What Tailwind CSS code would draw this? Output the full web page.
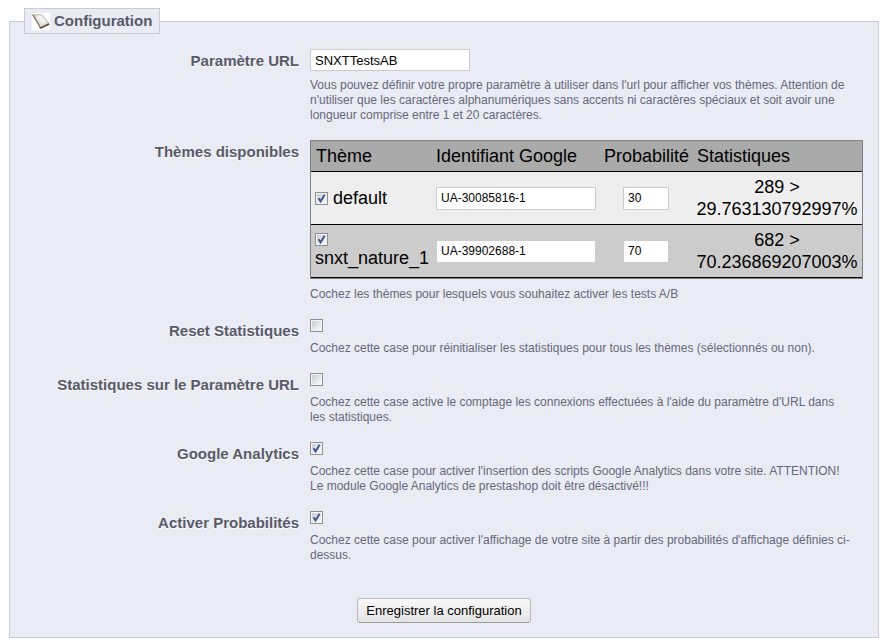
<!DOCTYPE html>
<html lang="fr">
<head>
<meta charset="utf-8">
<meta name="viewport" content="width=device-width, initial-scale=1">
<title>Configuration</title>
<script src="https://cdn.jsdelivr.net/npm/@tailwindcss/browser@4"></script>
</head>
<body class="bg-white font-['Liberation_Sans',Arial,sans-serif] text-black">
<svg class="hidden" aria-hidden="true">
  <symbol id="tick" viewBox="0 0 13 13"><path d="M3.6 6.2 5.6 9.4 9.6 2.8" fill="none" stroke="#3f5690" stroke-width="2"/></symbol>
</svg>
<form class="px-[9px] pt-2 pb-1">
  <fieldset class="border border-[#c9cbd6] bg-[#e9ecf4] px-[14px] pb-[14px]">
    <legend class="flex h-[26px] items-center gap-1 border border-[#c9cbd6] bg-[#e9ecf4] px-[7px] text-[15px] font-bold text-[#585a69]">
      <svg class="h-[17px] w-[18px] bg-white" viewBox="0 0 18 17" aria-hidden="true">
        <path d="M0.5 2 8 14 17 10.5 9.5 1.5Z" fill="#e6e2da" stroke="#b5aa98" stroke-width="0.8"/>
        <path d="M5 3 10 10.5 14.5 9 8.8 2.3Z" fill="#eef4fa"/>
        <path d="M0.8 1.6 8 13.8" stroke="#80715a" stroke-width="1.2"/>
        <path d="M7.6 14.6 9 15 17.2 11" fill="none" stroke="#5c4a35" stroke-width="1.6"/>
      </svg>
      Configuration
    </legend>

    <div class="grid grid-cols-[275px_minmax(0,1fr)] items-start gap-x-[11px] gap-y-[17px] pt-[15px] text-xs leading-[15px] text-[#66687a]">
      <label for="param" class="pt-1 text-right text-[15px] font-bold text-[#585a69] [text-shadow:0_1px_0_#fff]">Paramètre URL</label>
      <div>
        <input id="param" type="text" value="SNXTTestsAB" class="block h-[22px] w-40 border border-[#ccc] bg-white px-1 text-[13px] text-black">
        <p class="mt-[7px]">Vous pouvez définir votre propre paramètre à utiliser dans l'url pour afficher vos thèmes. Attention de n'utiliser que les caractères alphanumériques sans accents ni caractères spéciaux et soit avoir une longueur comprise entre 1 et 20 caractères.</p>
      </div>

      <div id="themes" class="pt-1 text-right text-[15px] font-bold text-[#585a69] [text-shadow:0_1px_0_#fff]">Thèmes disponibles</div>
      <div>
        <div class="mr-[1px] border border-[#808080]">
          <table aria-labelledby="themes" class="w-full table-fixed border-separate border-spacing-0 text-lg leading-[22px] text-black">
            <colgroup><col class="w-[120px]"><col class="w-[169px]"><col class="w-[92px]"><col></colgroup>
            <thead>
              <tr class="bg-[#aaa] text-left">
                <th class="border-b border-black px-[5px] py-1 font-normal whitespace-nowrap">Thème</th>
                <th class="border-b border-black px-[5px] py-1 font-normal whitespace-nowrap">Identifiant Google</th>
                <th class="border-b border-black px-1 py-1 font-normal whitespace-nowrap">Probabilité</th>
                <th class="border-b border-black px-[5px] py-1 font-normal whitespace-nowrap">Statistiques</th>
              </tr>
            </thead>
            <tbody>
              <tr class="bg-[#eee]">
                <td class="border-b border-black px-1 py-1">
                  <label class="flex items-center gap-x-[5px]">
                    <span class="grid">
                      <input type="checkbox" checked class="peer col-start-1 row-start-1 size-[13px] appearance-none border border-[#8e8f8f] bg-gradient-to-br from-[#c3c8d0] to-white ring-1 ring-[#f4f4f4] ring-inset">
                      <svg class="pointer-events-none invisible col-start-1 row-start-1 size-[13px] peer-checked:visible"><use href="#tick"/></svg>
                    </span>
                    default
                  </label>
                </td>
                <td class="border-b border-black px-[5px] py-1"><input type="text" aria-label="Identifiant Google default" value="UA-30085816-1" class="block h-[23px] w-40 border border-[#ccc] bg-white px-1 text-xs"></td>
                <td class="border-b border-black px-1 py-1"><input type="text" aria-label="Probabilité default" value="30" class="mx-auto block h-[23px] w-[46px] border border-[#ccc] bg-white px-1 text-xs"></td>
                <td class="border-b border-black px-1 py-1 text-center">289 &gt; 29.763130792997%</td>
              </tr>
              <tr class="bg-[#ccc]">
                <td class="border-b border-black px-1 py-1 align-top">
                  <label class="block leading-[18px]">
                    <span class="grid h-5 content-center">
                      <input type="checkbox" checked class="peer col-start-1 row-start-1 size-[13px] appearance-none border border-[#8e8f8f] bg-gradient-to-br from-[#c3c8d0] to-white ring-1 ring-[#f4f4f4] ring-inset">
                      <svg class="pointer-events-none invisible col-start-1 row-start-1 size-[13px] peer-checked:visible"><use href="#tick"/></svg>
                    </span>
                    snxt_nature_1
                  </label>
                </td>
                <td class="border-b border-black px-[5px] py-1"><input type="text" aria-label="Identifiant Google snxt_nature_1" value="UA-39902688-1" class="block h-[23px] w-40 border border-[#ccc] bg-white px-1 text-xs"></td>
                <td class="border-b border-black px-1 py-1"><input type="text" aria-label="Probabilité snxt_nature_1" value="70" class="mx-auto block h-[23px] w-[46px] border border-[#ccc] bg-white px-1 text-xs"></td>
                <td class="border-b border-black px-1 py-1 text-center">682 &gt; 70.236869207003%</td>
              </tr>
            </tbody>
          </table>
        </div>
        <p class="mt-2">Cochez les thèmes pour lesquels vous souhaitez activer les tests A/B</p>
      </div>

      <label for="reset" class="pt-1 text-right text-[15px] font-bold text-[#585a69] [text-shadow:0_1px_0_#fff]">Reset Statistiques</label>
      <div>
        <div class="grid">
          <input id="reset" type="checkbox" class="peer col-start-1 row-start-1 size-[13px] appearance-none border border-[#8e8f8f] bg-gradient-to-br from-[#c3c8d0] to-white ring-1 ring-[#f4f4f4] ring-inset">
          <svg class="pointer-events-none invisible col-start-1 row-start-1 size-[13px] peer-checked:visible"><use href="#tick"/></svg>
        </div>
        <p class="mt-[9px]">Cochez cette case pour réinitialiser les statistiques pour tous les thèmes (sélectionnés ou non).</p>
      </div>

      <label for="stats" class="pt-1 text-right text-[15px] font-bold text-[#585a69] [text-shadow:0_1px_0_#fff]">Statistiques sur le Paramètre URL</label>
      <div>
        <div class="grid">
          <input id="stats" type="checkbox" class="peer col-start-1 row-start-1 size-[13px] appearance-none border border-[#8e8f8f] bg-gradient-to-br from-[#c3c8d0] to-white ring-1 ring-[#f4f4f4] ring-inset">
          <svg class="pointer-events-none invisible col-start-1 row-start-1 size-[13px] peer-checked:visible"><use href="#tick"/></svg>
        </div>
        <p class="mt-[9px]">Cochez cette case active le comptage les connexions effectuées à l'aide du paramètre d'URL dans<br>les statistiques.</p>
      </div>

      <label for="analytics" class="pt-1 text-right text-[15px] font-bold text-[#585a69] [text-shadow:0_1px_0_#fff]">Google Analytics</label>
      <div>
        <div class="grid">
          <input id="analytics" type="checkbox" checked class="peer col-start-1 row-start-1 size-[13px] appearance-none border border-[#8e8f8f] bg-gradient-to-br from-[#c3c8d0] to-white ring-1 ring-[#f4f4f4] ring-inset">
          <svg class="pointer-events-none invisible col-start-1 row-start-1 size-[13px] peer-checked:visible"><use href="#tick"/></svg>
        </div>
        <p class="mt-[9px]">Cochez cette case pour activer l'insertion des scripts Google Analytics dans votre site. ATTENTION!<br>Le module Google Analytics de prestashop doit être désactivé!!!</p>
      </div>

      <label for="proba" class="pt-1 text-right text-[15px] font-bold text-[#585a69] [text-shadow:0_1px_0_#fff]">Activer Probabilités</label>
      <div>
        <div class="grid">
          <input id="proba" type="checkbox" checked class="peer col-start-1 row-start-1 size-[13px] appearance-none border border-[#8e8f8f] bg-gradient-to-br from-[#c3c8d0] to-white ring-1 ring-[#f4f4f4] ring-inset">
          <svg class="pointer-events-none invisible col-start-1 row-start-1 size-[13px] peer-checked:visible"><use href="#tick"/></svg>
        </div>
        <p class="mt-[9px]">Cochez cette case pour activer l'affichage de votre site à partir des probabilités d'affichage définies ci-dessus.</p>
      </div>
    </div>

    <div class="mt-[35px] flex justify-center">
      <button type="submit" class="h-[25px] rounded-[3px] border border-[#bbb] border-b-[#999] bg-gradient-to-b from-[#f9f9f9] to-[#e3e3e3] px-2 text-[13px] text-black">Enregistrer la configuration</button>
    </div>
  </fieldset>
</form>
</body>
</html>
